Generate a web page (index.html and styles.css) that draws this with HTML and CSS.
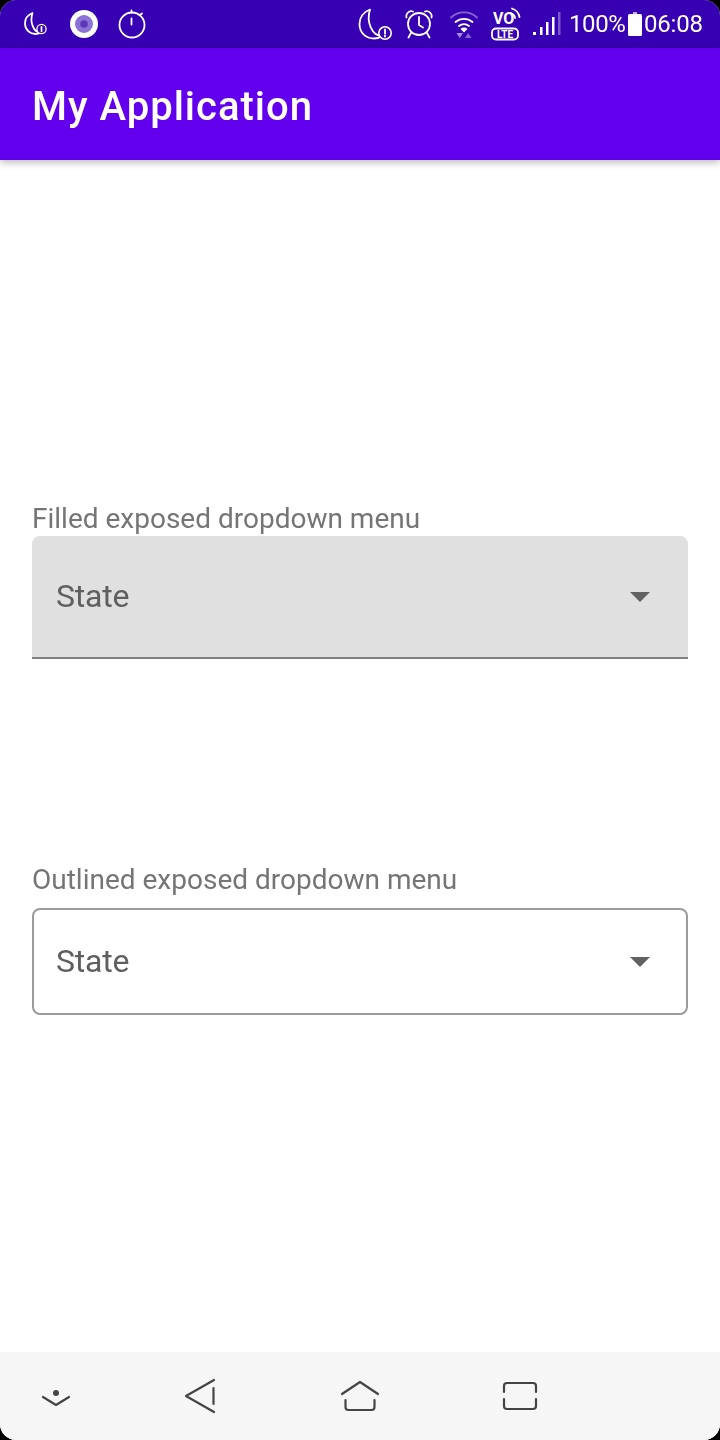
FILE: index.html
```html
<!DOCTYPE html>
<html lang="en">
<head>
    <meta charset="UTF-8">
    <meta name="viewport" content="width=device-width, initial-scale=1.0">
    <title>My Application</title>
    <link rel="stylesheet" href="styles.css">
</head>
<body>
    <div class="screen">
        <!-- status bar -->
        <div class="status-bar">
            <div class="status-left">
                <svg class="icon moon-small" width="24" height="24" viewBox="0 0 24 24">
                    <path class="line" d="M8.500 1C3.500 3 1 7.500 1 11.500C1 18 6 22 11.500 22C13.500 22 15 21.500 16.500 20.500C9.500 20.500 5.500 10 8.500 1Z"/>
                    <circle cx="17.500" cy="17" r="4.600" fill="#3700b3" stroke="#fff" stroke-width="1.300"/>
                    <path class="line" d="M17.500 14.800v2.600M17.500 18.800v.5"/>
                </svg>
                <svg class="icon" width="28" height="28" viewBox="0 0 28 28">
                    <circle cx="14" cy="14" r="14" fill="#fff"/>
                    <circle cx="14" cy="14" r="9" fill="#8d73d6"/>
                    <circle cx="14" cy="14" r="3.800" fill="#5a38b8"/>
                </svg>
                <svg class="icon" width="28" height="30" viewBox="0 0 28 30">
                    <circle class="line" cx="14" cy="16" r="12.500"/>
                    <path class="line" d="M13.500 9.500v6M13.500 1.500v2M22.500 5.500l1.500-1"/>
                </svg>
            </div>
            <div class="status-right">
                <svg class="icon" width="34" height="32" viewBox="0 0 34 32">
                    <path class="line" d="M12 1.500C5 4 1.500 10 1.500 16C1.500 25 8 30.500 16 30.500C19 30.500 22 29.500 24 28C14 28 8 14 12 1.500Z"/>
                    <circle cx="27" cy="25" r="6.200" fill="#3700b3" stroke="#fff" stroke-width="1.600"/>
                    <path class="line" d="M27 21.500v4.200M27 27.600v.9"/>
                </svg>
                <svg class="icon alarm" width="28" height="30" viewBox="0 0 28 30">
                    <circle class="line" cx="14" cy="15" r="11"/>
                    <path class="line" d="M14 8v8l4 2.500M1.500 8.500A5 5 0 0 1 8 2.500M26.500 8.500A5 5 0 0 0 20 2.500M6 24l-2.500 4.500M22 24l2.500 4.500"/>
                </svg>
                <svg class="icon wifi" width="28" height="28" viewBox="0 0 28 28">
                    <path class="line dim" d="M1 7.500A19 19 0 0 1 27 7.500"/>
                    <path class="line" d="M5.500 12A13 13 0 0 1 22.500 12M9 16A8 8 0 0 1 19 16"/>
                    <path d="M10.500 19A5 5 0 0 1 17.500 19L14 22.500Z" fill="#fff"/>
                    <path d="M6.500 23H13L9.700 28Z" fill="#fff" opacity="0.55"/>
                    <path d="M15 28H21.500L18.200 23Z" fill="#fff" opacity="0.4"/>
                </svg>
                <svg class="icon volte" width="30" height="34" viewBox="0 0 30 34">
                    <text class="volte-vo" x="2" y="17">VO</text>
                    <path class="line" d="M20 6A6 6 0 0 1 24 11M21 1.500A11 11 0 0 1 28.500 10"/>
                    <rect class="line" x="1" y="21.500" width="26" height="11" rx="4"/>
                    <text class="volte-lte" x="14" y="30.500">LTE</text>
                </svg>
                <svg class="icon signal" width="28" height="24" viewBox="0 0 28 24">
                    <rect x="0" y="20" width="3" height="3" fill="#fff"/>
                    <rect x="7" y="15" width="2.500" height="8" fill="#fff"/>
                    <rect x="13" y="10" width="2.500" height="13" fill="#fff"/>
                    <rect x="19" y="5" width="2.500" height="18" fill="#fff"/>
                    <rect x="25" y="0" width="2.500" height="23" fill="#fff" opacity="0.35"/>
                </svg>
                <span class="status-text percent">100%</span>
                <svg class="icon battery" width="14" height="24" viewBox="0 0 14 24">
                    <rect x="5" y="0" width="4" height="2" fill="#fff" opacity="0.7"/>
                    <rect x="0" y="2" width="14" height="22" rx="1.500" fill="#fff"/>
                </svg>
                <span class="status-text clock">06:08</span>
            </div>
        </div>

        <header class="app-bar"><span class="plain-text">My Application</span></header>

        <main class="content">
            <section class="filled-group">
                <div class="field-label plain-text">Filled exposed dropdown menu</div>
                <div class="dropdown dropdown-filled">
                    <span class="plain-text">State</span>
                    <svg class="arrow" width="20" height="10" viewBox="0 0 20 10"><path d="M0 0H20L10 10Z"/></svg>
                </div>
            </section>
            <section class="outlined-group">
                <div class="field-label plain-text">Outlined exposed dropdown menu</div>
                <div class="dropdown dropdown-outlined">
                    <span class="plain-text">State</span>
                    <svg class="arrow" width="20" height="10" viewBox="0 0 20 10"><path d="M0 0H20L10 10Z"/></svg>
                </div>
            </section>
        </main>

        <!-- navigation bar -->
        <nav class="nav-bar">
            <svg class="nav-icon nav-hide" width="40" height="40" viewBox="0 0 40 40">
                <circle cx="20" cy="17" r="3" fill="#444" stroke="none"/>
                <path d="M7 21L20 29L33 21"/>
            </svg>
            <svg class="nav-icon nav-back" width="40" height="40" viewBox="0 0 40 40">
                <path d="M34 4L6 20L34 36M33.500 12V28"/>
            </svg>
            <svg class="nav-icon nav-home" width="40" height="40" viewBox="0 0 40 40">
                <path d="M2 18L20 6L38 18M5.500 24V31Q5.500 34 8.500 34H31.500Q34.500 34 34.500 31V24"/>
            </svg>
            <svg class="nav-icon nav-recent" width="40" height="40" viewBox="0 0 40 40">
                <path d="M4 16V10Q4 7 7 7H33Q36 7 36 10V16M4 23V30Q4 33 7 33H33Q36 33 36 30V23"/>
            </svg>
        </nav>
    </div>
</body>
</html>
```

FILE: styles.css
```css
* {
    box-sizing: border-box;
    margin: 0;
    padding: 0;
}
body {
    background: #000;
    font-family: Roboto, "Noto Sans", sans-serif;
}
.screen {
    display: flex;
    flex-direction: column;
    width: 720px;
    height: 1440px;
    background: #fff;
    border-radius: 16px;
    overflow: hidden;
}
/* own layer, so the text is drawn with grey antialiasing */
.plain-text,
.status-text {
    display: block;
    will-change: transform;
}
.status-bar {
    display: flex;
    justify-content: space-between;
    align-items: center;
    height: 48px;
    padding: 0 17px 0 24px;
    background: #3700b3;
    color: #fff;
}
.status-left,
.status-right {
    display: flex;
    align-items: center;
}
.status-left {
    gap: 21px;
}
.moon-small {
    margin-right: 1px;
}
.status-left .icon:last-child {
    margin-left: -1px;
}
.icon {
    display: block;
    flex: none;
}
.line {
    fill: none;
    stroke: #fff;
    stroke-width: 1.8;
    stroke-linecap: round;
    stroke-linejoin: round;
}
.dim {
    opacity: 0.4;
}
.alarm {
    margin-left: 13px;
}
.wifi {
    margin-left: 17px;
}
.volte {
    margin-left: 13px;
}
.volte-vo {
    fill: #fff;
    font-size: 16px;
    font-weight: 700;
}
.volte-lte {
    fill: #fff;
    font-size: 10px;
    font-weight: 700;
    text-anchor: middle;
}
.signal {
    margin-left: 12px;
}
.status-text {
    font-size: 24px;
    line-height: 48px;
}
.percent {
    margin-left: 8px;
    letter-spacing: -0.4px;
}
.battery {
    margin-left: 3px;
}
.clock {
    margin-left: 2px;
    letter-spacing: -0.2px;
}
.app-bar {
    position: relative;
    height: 112px;
    padding: 0 32px;
    background: #6200ee;
    color: #fff;
    font-size: 40px;
    font-weight: 500;
    letter-spacing: 1px;
    line-height: 118px;
    box-shadow: 0 2px 8px rgba(0, 0, 0, 0.3);
}
.content {
    flex: 1;
    padding: 340px 32px 0;
}
.field-label {
    height: 36px;
    color: #757575;
    font-size: 28px;
    line-height: 38px;
}
.dropdown {
    display: flex;
    justify-content: space-between;
    align-items: center;
    padding: 0 38px 0 24px;
    color: #5f5f5f;
    font-size: 32px;
    line-height: 36px;
}
.dropdown span {
    margin-top: -2px;
    letter-spacing: -0.2px;
}
.dropdown-filled {
    height: 123px;
    background: #e0e0e0;
    border-bottom: 2px solid #808080;
    border-radius: 8px 8px 0 0;
}
.outlined-group {
    margin-top: 202px;
}
.dropdown-outlined {
    height: 107px;
    margin-top: 11px;
    padding: 0 36px 0 22px;
    border: 2px solid #9b9b9b;
    border-radius: 8px;
}
.arrow {
    display: block;
    fill: #616161;
}
.nav-bar {
    display: flex;
    align-items: center;
    height: 88px;
    padding-left: 36px;
    background: #f6f6f6;
}
.nav-icon {
    display: block;
    flex: none;
    fill: none;
    stroke: #444;
    stroke-width: 2.2;
    stroke-linecap: round;
    stroke-linejoin: round;
}
.nav-back {
    margin-left: 104px;
}
.nav-home,
.nav-recent {
    margin-left: 120px;
}
```
